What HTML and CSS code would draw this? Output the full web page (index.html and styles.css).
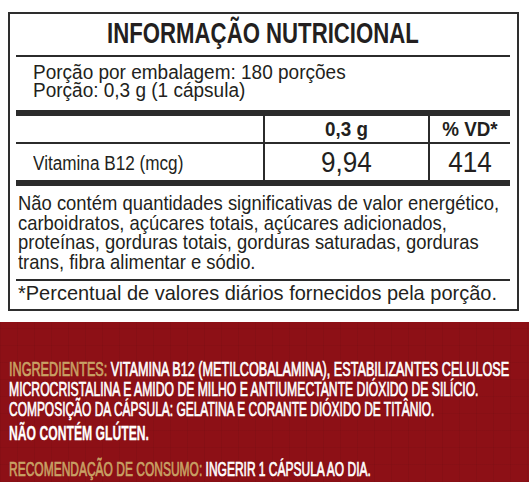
FILE: index.html
```html
<!DOCTYPE html>
<html lang="pt-BR">
<head>
<meta charset="utf-8">
<title>Informação Nutricional</title>
<link rel="stylesheet" href="styles.css">
</head>
<body>
<div class="label">
  <div class="title"><div class="tt">INFORMAÇÃO NUTRICIONAL</div></div>
  <div class="rule"></div>
  <div class="serving">
    <div class="sline">Porção por embalagem: 180 porções</div>
    <div class="sline">Porção: 0,3 g (1 cápsula)</div>
  </div>
  <div class="table">
    <div class="cell head"></div>
    <div class="cell head col"><div class="ht">0,3 g</div></div>
    <div class="cell head col"><div class="ht">% VD*</div></div>
    <div class="cell name"><div class="nt">Vitamina B12 (mcg)</div></div>
    <div class="cell val col"><div class="vt">9,94</div></div>
    <div class="cell val col"><div class="vt">414</div></div>
  </div>
  <div class="note">
    <div class="nline">Não contém quantidades significativas de valor energético,</div>
    <div class="nline">carboidratos, açúcares totais, açúcares adicionados,</div>
    <div class="nline">proteínas, gorduras totais, gorduras saturadas, gorduras</div>
    <div class="nline">trans, fibra alimentar e sódio.</div>
  </div>
  <div class="rule"></div>
  <div class="foot"><div class="ft">*Percentual de valores diários fornecidos pela porção.</div></div>
</div>
<div class="band">
  <div class="rline r1"><span class="gold">INGREDIENTES:</span> VITAMINA B12 (METILCOBALAMINA), ESTABILIZANTES CELULOSE</div>
  <div class="rline r2">MICROCRISTALINA E AMIDO DE MILHO E ANTIUMECTANTE DIÓXIDO DE SILÍCIO.</div>
  <div class="rline r3">COMPOSIÇÃO DA CÁPSULA: GELATINA E CORANTE DIÓXIDO DE TITÂNIO.</div>
  <div class="rline r4">NÃO CONTÉM GLÚTEN.</div>
  <div class="rline r5"><span class="gold">RECOMENDAÇÃO DE CONSUMO:</span> INGERIR 1 CÁPSULA AO DIA.</div>
</div>
</body>
</html>
```
FILE: styles.css
```css
html, body {
  margin: 0;
  padding: 0;
  background: #ffffff;
}
body {
  width: 529px;
  height: 482px;
  overflow: hidden;
  font-family: "Liberation Sans", Arial, sans-serif;
  color: #231f20;
}
.label {
  box-sizing: border-box;
  margin: 12px 0 0 8px;
  width: 511px;
  height: 299px;
  border: 2px solid #2e2e2e;
  padding: 0 7px 0 6px;
}
.title {
  height: 41px;
  text-align: center;
}
.tt {
  font-weight: bold;
  font-size: 29px;
  line-height: 38px;
  white-space: nowrap;
  transform: scaleX(0.765);
  transform-origin: center;
}
.rule {
  height: 2px;
  background: #2b2b2b;
}
.serving {
  padding: 6px 0 11px 17px;
}
.sline {
  font-size: 20px;
  line-height: 18px;
  white-space: nowrap;
  transform: scaleX(0.95);
  transform-origin: left center;
}
.table {
  display: grid;
  grid-template-columns: 247px 165px 82px;
  border-top: 6px solid #2b2b2b;
  border-bottom: 6px solid #2b2b2b;
}
.cell {
  box-sizing: border-box;
}
.col {
  border-left: 2px solid #2b2b2b;
  text-align: center;
}
.head {
  height: 28px;
  border-bottom: 2px solid #2b2b2b;
}
.ht {
  font-weight: bold;
  font-size: 20px;
  line-height: 26px;
  white-space: nowrap;
  transform: scaleX(0.94);
  transform-origin: center;
}
.name {
  height: 36px;
  padding: 3px 0 0 17px;
}
.nt {
  font-size: 19.5px;
  line-height: 33px;
  white-space: nowrap;
  transform: scaleX(0.88);
  transform-origin: left center;
}
.val {
  height: 36px;
}
.vt {
  font-size: 29px;
  line-height: 36px;
  white-space: nowrap;
  transform: scaleX(0.9);
  transform-origin: center;
}
.note {
  padding: 7px 0 8px 2px;
}
.nline {
  font-size: 21px;
  line-height: 19.5px;
  white-space: nowrap;
  transform: scaleX(0.877);
  transform-origin: left center;
}
.foot {
  height: 28px;
  box-sizing: border-box;
  padding: 1px 0 0 2px;
}
.ft {
  font-size: 21px;
  line-height: 22px;
  white-space: nowrap;
  transform: scaleX(0.952);
  transform-origin: left center;
}
.band {
  box-sizing: border-box;
  margin-top: 11px;
  height: 160px;
  padding: 37px 0 0 9px;
  background-color: #8d1016;
  background-image:
    repeating-linear-gradient(90deg, rgba(0,0,0,0.045) 0 1px, transparent 1px 17px),
    repeating-linear-gradient(0deg, rgba(0,0,0,0.035) 0 1px, transparent 1px 17px);
  color: #ffffff;
}
.rline {
  font-size: 19.5px;
  line-height: 20px;
  white-space: nowrap;
  transform-origin: left center;
  -webkit-text-stroke: 0.7px currentColor;
}
.gold {
  color: #c9a265;
}
.r1 { transform: scaleX(0.648); }
.r2 { transform: scaleX(0.625); }
.r3 { transform: scaleX(0.613); }
.r4 { transform: scaleX(0.624); font-weight: bold; margin-top: 4px; -webkit-text-stroke: 0.3px currentColor; }
.r5 { transform: scaleX(0.615); margin-top: 16px; }
```
